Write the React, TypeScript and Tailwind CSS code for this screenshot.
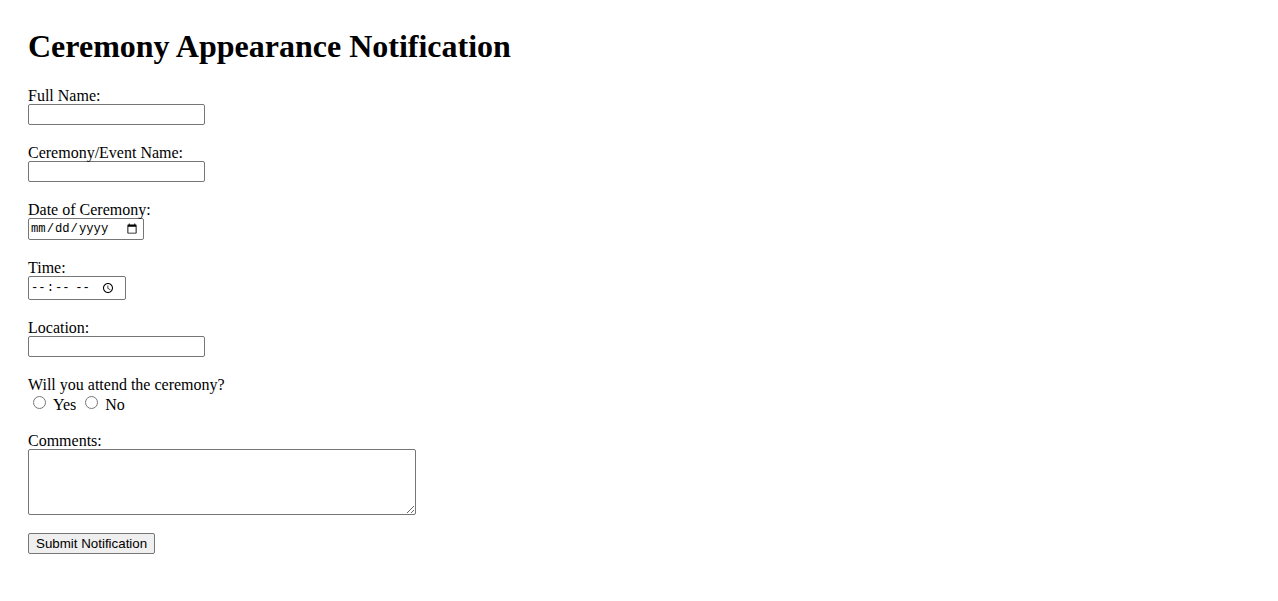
const inputCls =
  "block w-[177px] h-[21px] border border-[#767676] rounded-[2px] bg-white px-[2px] py-[1px] font-['Liberation_Sans',Arial,sans-serif] text-[13.33px] text-black";

const Field = ({ label, children }: { label: string; children: React.ReactNode }) => (
  <div className="mb-[20px]">
    <label className="block leading-[16px]">{label}</label>
    {children}
  </div>
);

export default function App() {
  return (
    <div className="min-h-[601px] bg-white pt-[28px] pl-[28px] font-['Liberation_Serif','Times_New_Roman',serif] text-[16px] text-black">
      <h1 className="mb-[23.2px] text-[32px] font-bold leading-[36.8px]">Ceremony Appearance Notification</h1>
      <form onSubmit={(e) => e.preventDefault()}>
        <Field label="Full Name:">
          <input type="text" className={inputCls} />
        </Field>
        <Field label="Ceremony/Event Name:">
          <input type="text" className={inputCls} />
        </Field>
        <Field label="Date of Ceremony:">
          <input
            type="date"
            className="flex w-[116px] h-[22px] border border-[#767676] rounded-[2px] bg-white pl-[1px] font-['Liberation_Mono','DejaVu_Sans_Mono',monospace] text-[12.2px] text-black"
          />
        </Field>
        <Field label="Time:">
          <input
            type="time"
            className="flex w-[98px] h-[24px] border border-[#767676] rounded-[2px] bg-white pl-[1px] font-['Liberation_Mono','DejaVu_Sans_Mono',monospace] text-[12.2px] text-black"
          />
        </Field>
        <Field label="Location:">
          <input type="text" className={inputCls} />
        </Field>
        <div className="mb-[19px]">
          <label className="block leading-[16px]">Will you attend the ceremony?</label>
          <div className="mt-[2.6px] flex items-start leading-[18.4px]">
            <input type="radio" name="attend" value="yes" id="yes" className="ml-[5px] mr-[7px] h-[13px] w-[13px]" />
            <label htmlFor="yes">Yes</label>
            <input type="radio" name="attend" value="no" id="no" className="ml-[9px] mr-[7px] h-[13px] w-[13px]" />
            <label htmlFor="no">No</label>
          </div>
        </div>
        <div className="mb-[16px]">
          <label className="block leading-[16px]">Comments:</label>
          <textarea className="block w-[388px] h-[66px] border border-[#767676] rounded-[2px] bg-white px-[2px] py-[1px] font-['Liberation_Mono',monospace] text-[13.33px]" />
        </div>
        <button
          type="submit"
          className="h-[21px] border border-[#767676] rounded-[2px] bg-[#efefef] px-[7px] font-['Liberation_Sans',Arial,sans-serif] text-[13.33px] leading-[15px] text-black"
        >
          Submit Notification
        </button>
      </form>
    </div>
  );
}
